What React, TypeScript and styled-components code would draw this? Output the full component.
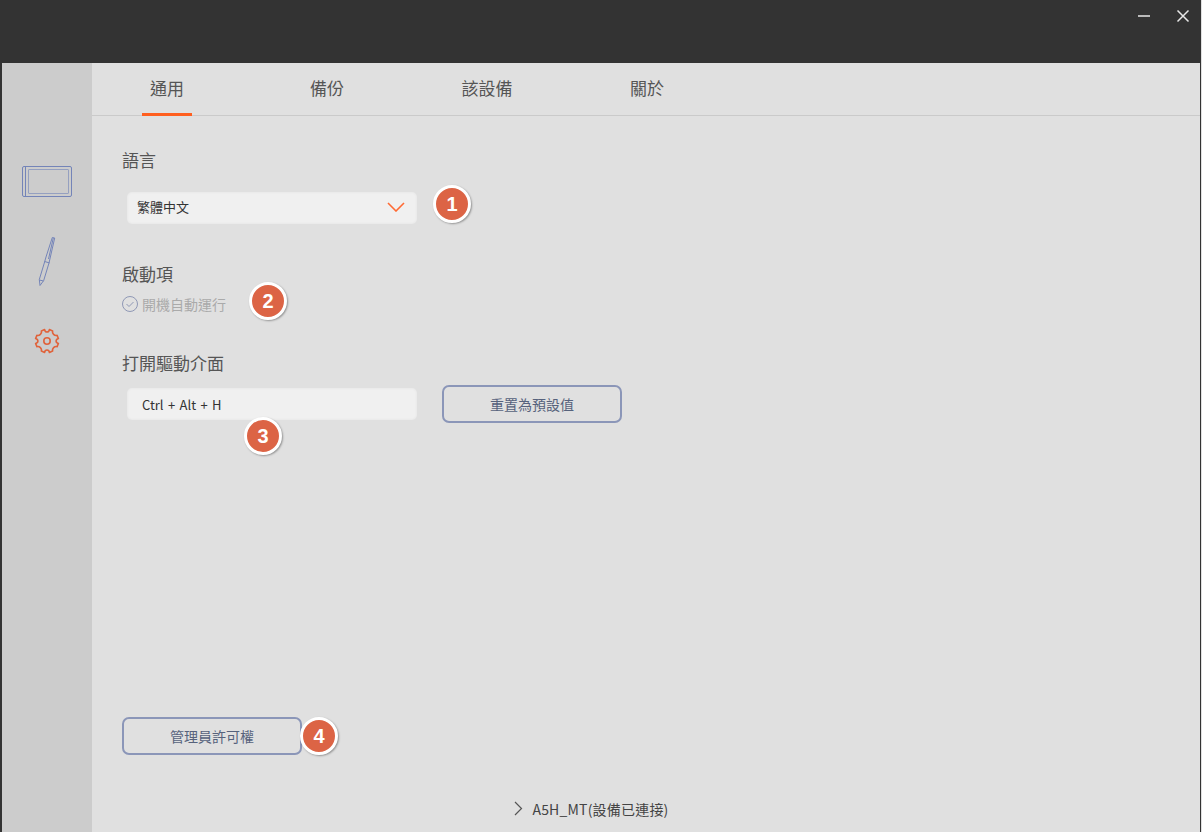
import React from "react";
import styled, { createGlobalStyle } from "styled-components";

const Global = createGlobalStyle`
  html, body { margin: 0; padding: 0; background: #e0e0e0; }
  body { font-family: "Noto Sans CJK TC", "Open Sans", sans-serif; }
`;

const Win = styled.div`
  width: 1201px; height: 832px; box-sizing: border-box;
  border-left: 2px solid #333; border-right: 1px solid #333;
  display: flex; flex-direction: column; overflow: hidden;
`;
const TitleBar = styled.header`
  height: 63px; flex: none; background: #333;
  display: flex; justify-content: flex-end; align-items: flex-start;
  padding: 9px 10px 0 0; box-sizing: border-box; gap: 25px;
`;
const WinBtn = styled.svg`width: 14px; height: 14px; color: #e8e8e8; flex: none;`;
const Body = styled.div`flex: 1; display: flex; min-height: 0;`;
const Side = styled.nav`
  width: 90px; flex: none; background: #cccccc;
  display: flex; flex-direction: column; align-items: center;
  padding-top: 103px; box-sizing: border-box;
`;
const SideIcon = styled.svg<{ $mt: number }>`display: block; margin-top: ${p => p.$mt}px; flex: none;`;
const Main = styled.main`flex: 1; display: flex; flex-direction: column; background: #e0e0e0; min-width: 0;`;
const Tabs = styled.div`
  height: 53px; box-sizing: border-box; flex: none;
  border-bottom: 1px solid #cacaca;
  display: flex; gap: 110px; padding-left: 50px;
`;
const Tab = styled.div<{ $active?: boolean }>`
  width: 50px; height: 53px; box-sizing: border-box; flex: none;
  display: flex; justify-content: center; align-items: center;
  padding-bottom: 2px; white-space: nowrap;
  font-size: 17px; color: #555;
  border-bottom: 3px solid ${p => (p.$active ? "#ff5f1f" : "transparent")};
`;
const Content = styled.div`
  flex: 1; display: flex; flex-direction: column;
  padding: 33px 0 7px 30px; min-height: 0;
`;
const Heading = styled.h2<{ $mt?: number }>`
  margin: ${p => p.$mt ?? 0}px 0 0; font-size: 17px; line-height: 22px; font-weight: 400; color: #555;
`;
const FieldRow = styled.div<{ $mt: number }>`
  position: relative; display: flex; align-items: center; margin-top: ${p => p.$mt}px;
`;
const Field = styled.div<{ $pad: number; $raise?: boolean }>`
  width: 290px; height: 32px; margin-left: 5px; box-sizing: border-box; flex: none;
  background: #f0f0f0; border-radius: 5px; box-shadow: inset 0 0 3px rgba(0,0,0,.06);
  display: flex; align-items: center; justify-content: space-between;
  padding: 0 12px ${p => (p.$raise ? 3 : 0)}px ${p => p.$pad}px;
  font-size: 13px; color: #333; word-spacing: 1.5px;
`;
const CheckRow = styled.div`
  position: relative; display: flex; align-items: center; gap: 4px;
  margin-top: 9px; height: 20px; font-size: 14px; color: #aaa;
`;
const OutlineButton = styled.button<{ $ml?: number }>`
  width: 180px; height: 38px; flex: none; box-sizing: border-box;
  margin-left: ${p => p.$ml ?? 0}px;
  border: 2px solid #8b96b8; border-radius: 7px; background: transparent;
  font-family: inherit; font-size: 14px; color: #56627c; padding: 0;
`;
const Badge = styled.span<{ $l: number; $t: number }>`
  position: absolute; left: ${p => p.$l}px; top: ${p => p.$t}px;
  width: 38px; height: 38px; box-sizing: border-box; border-radius: 50%;
  background: #dc6445; border: 3px solid #fff; box-shadow: 1px 1px 2px rgba(0,0,0,.35);
  display: flex; align-items: center; justify-content: center;
  font-family: "Liberation Sans", sans-serif; font-weight: 700; font-size: 20px; color: #fff;
`;
const AdminRow = styled.div`position: relative; display: flex; margin-top: auto;`;
const Footer = styled.footer`
  height: 30px; margin-top: 40px; margin-left: -30px; width: 998px; box-sizing: border-box; padding-bottom: 2px;
  display: flex; align-items: center; justify-content: center; gap: 8px;
  font-size: 14px; letter-spacing: .2px; color: #444;
`;
const FooterChevron = styled.svg`width: 11px; height: 15px; flex: none; margin-top: -2px;`;

export default function App() {
  return (
    <Win>
      <Global />
      <TitleBar>
        <WinBtn viewBox="0 0 14 14" fill="none" stroke="currentColor" strokeWidth="1.5"><path d="M1 7h12" /></WinBtn>
        <WinBtn viewBox="0 0 14 14" fill="none" stroke="currentColor" strokeWidth="1.5"><path d="M1.5 1.5l11 11M12.5 1.5l-11 11" /></WinBtn>
      </TitleBar>
      <Body>
        <Side>
          <SideIcon $mt={0} width="50" height="31" viewBox="0 0 50 31" fill="none" stroke="#7484b8" strokeWidth="1">
            <rect x="0.5" y="0.5" width="49" height="30" rx="1.5" />
            <path d="M3.5 1v29" />
            <rect x="6.5" y="3.5" width="40" height="24" rx="0.5" stroke="#95a0c0" />
          </SideIcon>
          <SideIcon $mt={40} width="18" height="50" viewBox="0 0 18 50" fill="none" stroke="#7484b8" strokeWidth="1" strokeLinejoin="round">
            <path d="M14.3.5l2.4.5-5.7 25-5.3 17.5L2 48.5l-.7-6L6.3 26 8 20z" />
            <path d="M15.3 1l-4.8 21M6.6 24.5l4.8 1.4M1.4 43l4.2 1" />
          </SideIcon>
          <SideIcon $mt={41} width="26" height="26" viewBox="0 0 26 26" fill="none" stroke="#e0623a" strokeWidth="1.6" strokeLinejoin="round">
            <path d="M10.6 1.6c.2 1.6 1.4 2.4 2.4 2.4s2.2-.8 2.4-2.4l3.2 1.3c-.4 1.6.3 2.8 1 3.5s2 1.3 3.5 1l1.3 3.1c-1.5.4-2.3 1.5-2.3 2.5s.8 2.1 2.3 2.5l-1.3 3.1c-1.5-.3-2.8.3-3.5 1s-1.4 1.9-1 3.5l-3.2 1.3c-.2-1.6-1.4-2.4-2.4-2.4s-2.2.8-2.4 2.4l-3.2-1.3c.4-1.6-.3-2.8-1-3.5s-2-1.3-3.5-1l-1.3-3.1c1.5-.4 2.3-1.5 2.3-2.5s-.8-2.1-2.3-2.5l1.3-3.1c1.5.3 2.8-.3 3.5-1s1.4-1.9 1-3.5z" />
            <circle cx="13" cy="13" r="3.2" />
          </SideIcon>
        </Side>
        <Main>
          <Tabs>
            <Tab $active>通用</Tab>
            <Tab>備份</Tab>
            <Tab>該設備</Tab>
            <Tab>關於</Tab>
          </Tabs>
          <Content>
            <Heading>語言</Heading>
            <FieldRow $mt={21}>
              <Field $pad={10} $raise>
                繁體中文
                <svg width="18" height="10" viewBox="0 0 18 10" fill="none" stroke="#ff6a33" strokeWidth="1.6"><path d="M1 1l8 8 8-8" /></svg>
              </Field>
              <Badge $l={311} $t={-7}>1</Badge>
            </FieldRow>
            <Heading $mt={39}>啟動項</Heading>
            <CheckRow>
              <svg width="16" height="16" viewBox="0 0 16 16" fill="none" stroke="#8f98b5" strokeWidth="1"><circle cx="8" cy="8" r="7.5" /><path d="M4.5 8l2.5 2.5 4.5-4.5" /></svg>
              開機自動運行
              <Badge $l={127} $t={-12}>2</Badge>
            </CheckRow>
            <Heading $mt={38}>打開驅動介面</Heading>
            <FieldRow $mt={11}>
              <Field $pad={15}>Ctrl + Alt + H</Field>
              <OutlineButton $ml={25}>重置為預設值</OutlineButton>
              <Badge $l={122} $t={32}>3</Badge>
            </FieldRow>
            <AdminRow>
              <OutlineButton>管理員許可權</OutlineButton>
              <Badge $l={178} $t={0}>4</Badge>
            </AdminRow>
            <Footer>
              <FooterChevron viewBox="0 0 11 15" fill="none" stroke="#555" strokeWidth="1.2"><path d="M2 1l6.5 6.5L2 14" /></FooterChevron>
              A5H_MT(設備已連接)
            </Footer>
          </Content>
        </Main>
      </Body>
    </Win>
  );
}
